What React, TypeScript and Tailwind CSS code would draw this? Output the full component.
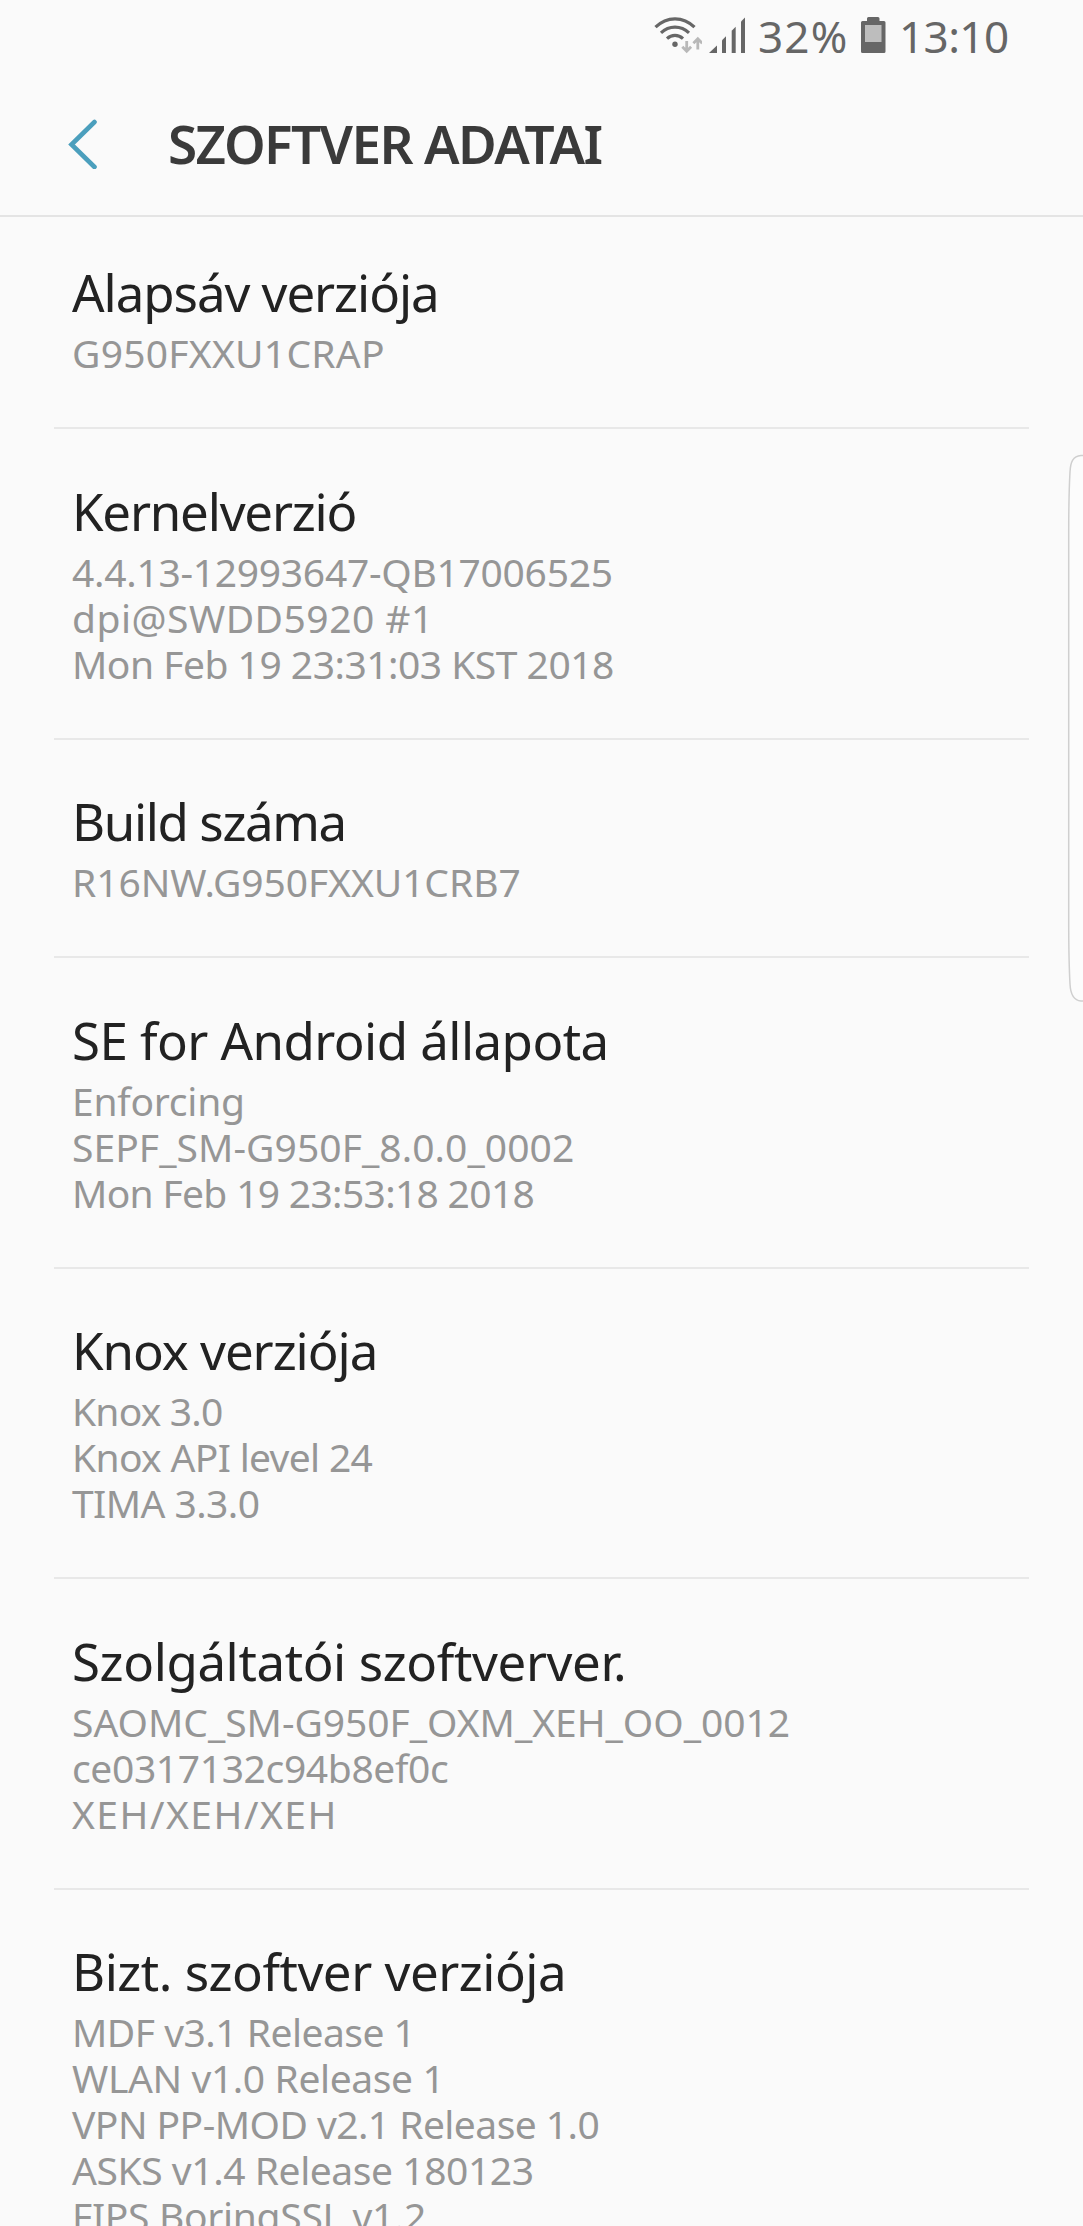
interface Line {
  text: string
  className: string
}

interface Item {
  title: Line
  lines: Line[]
}

const ITEMS: Item[] = [
  {
    title: { text: 'Alapsáv verziója', className: 'tracking-[-1.05px]' },
    lines: [{ text: 'G950FXXU1CRAP', className: 'tracking-[0.26px]' }],
  },
  {
    title: { text: 'Kernelverzió', className: 'tracking-[-1.2px]' },
    lines: [
      { text: '4.4.13-12993647-QB17006525', className: 'tracking-[-0.28px]' },
      { text: 'dpi@SWDD5920 #1', className: 'tracking-[0.48px]' },
      { text: 'Mon Feb 19 23:31:03 KST 2018', className: 'tracking-[-0.5px]' },
    ],
  },
  {
    title: { text: 'Build száma', className: 'tracking-[-1.38px]' },
    lines: [{ text: 'R16NW.G950FXXU1CRB7', className: 'tracking-[-0.07px]' }],
  },
  {
    title: { text: 'SE for Android állapota', className: 'tracking-[-0.55px]' },
    lines: [
      { text: 'Enforcing', className: 'tracking-[-0.25px]' },
      { text: 'SEPF_SM-G950F_8.0.0_0002', className: 'tracking-[0.06px]' },
      { text: 'Mon Feb 19 23:53:18 2018', className: 'tracking-[-0.68px]' },
    ],
  },
  {
    title: { text: 'Knox verziója', className: 'tracking-[-1.03px]' },
    lines: [
      { text: 'Knox 3.0', className: 'tracking-[-0.8px]' },
      { text: 'Knox API level 24', className: 'tracking-[-0.67px]' },
      { text: 'TIMA 3.3.0', className: 'tracking-[-0.57px]' },
    ],
  },
  {
    title: { text: 'Szolgáltatói szoftverver.', className: 'tracking-[-0.39px]' },
    lines: [
      { text: 'SAOMC_SM-G950F_OXM_XEH_OO_0012', className: 'tracking-[-0.03px]' },
      { text: 'ce0317132c94b8ef0c', className: 'tracking-[-0.37px]' },
      { text: 'XEH/XEH/XEH', className: 'tracking-[1.51px]' },
    ],
  },
  {
    title: { text: 'Bizt. szoftver verziója', className: 'tracking-[-0.49px]' },
    lines: [
      { text: 'MDF v3.1 Release 1', className: 'tracking-[-0.51px]' },
      { text: 'WLAN v1.0 Release 1', className: 'tracking-[-0.39px]' },
      { text: 'VPN PP-MOD v2.1 Release 1.0', className: 'tracking-[-0.55px]' },
      { text: 'ASKS v1.4 Release 180123', className: 'tracking-[-0.43px]' },
      { text: 'FIPS BoringSSL v1.2', className: 'tracking-[-0.32px]' },
    ],
  },
]

function WifiIcon() {
  return (
    <svg className="h-[72px] w-[50px]" viewBox="652 0 50 72" fill="none">
      <g stroke="#666" strokeWidth="3.2">
        <path d="M655.5 27.2Q664 18.8 675 18.8T694.5 27.2" />
        <path d="M661 32.8Q667 27.2 675 27.2T689 32.8" />
        <path d="M667 38.6Q670.5 35.4 675 35.4T683 38.6" />
      </g>
      <circle cx="675" cy="44.2" r="2.7" fill="#666" />
      <g stroke="#b8b8b8" strokeWidth="2.8">
        <path d="M686.7 41V51M682.3 46.8L686.7 51.2L691.1 46.8" />
        <path d="M697.8 49.5V39M693.4 43.2L697.8 38.8L702.2 43.2" />
      </g>
    </svg>
  )
}

function SignalIcon() {
  return (
    <svg className="h-[72px] w-[38px]" viewBox="708 0 38 72" fill="#666">
      <path d="M709 53L717 45.5V53Z" />
      <path d="M722 53V40.2L726 36.2V53Z" />
      <path d="M731.7 53V30.7L735.7 26.7V53Z" />
      <path d="M741 53V21.5L745 17.5V53Z" />
    </svg>
  )
}

function BatteryIcon() {
  return (
    <svg className="h-[72px] w-[26px]" viewBox="860 0 26 72">
      <path d="M868.5 17H878Q879.5 17 879.5 18.5V21H884Q885.5 21 885.5 22.5V51.5Q885.5 53 884 53H862.5Q861 53 861 51.5V22.5Q861 21 862.5 21H867V18.5Q867 17 868.5 17Z" fill="#666" />
      <rect x="865" y="25" width="16.5" height="17" fill="#bdbdbd" />
    </svg>
  )
}

export default function App() {
  return (
    <div className="relative h-[2226px] w-[1083px] overflow-hidden bg-[#fafafa] font-['Noto_Sans','Open_Sans',sans-serif]">
      <div className="flex h-[72px] items-start pl-[652px] text-[44px] leading-[72px] text-[#666]">
        <WifiIcon />
        <div className="ml-[6px]">
          <SignalIcon />
        </div>
        <span className="ml-[12px] w-[102px] whitespace-nowrap tracking-[1.2px]">32%</span>
        <BatteryIcon />
        <span className="ml-[13px] whitespace-nowrap tracking-[-0.6px]">13:10</span>
      </div>

      <header className="flex h-[145px] items-center border-b-2 border-[#e4e4e4] pl-[66px]">
        <svg className="h-[50px] w-[32px]" viewBox="0 0 32 50" fill="none" stroke="#4b9fbd" strokeWidth="4.6">
          <path d="M28.5 3L5.5 25.5L28.5 48" strokeLinecap="round" />
        </svg>
        <h1 className="ml-[70px] whitespace-nowrap text-[53px] leading-[72px] font-semibold tracking-[-1.59px] text-[#3a3a3a]">
          SZOFTVER ADATAI
        </h1>
      </header>

      <ul className="mr-[54px] ml-[54px]">
        {ITEMS.map((item, i) => (
          <li
            key={item.title.text}
            className={`border-b-2 border-[#e8e8e8] pb-[51px] pl-[18px] ${i === 0 ? 'pt-[38px]' : 'pt-[44.5px]'}`}
          >
            <h2 className={`whitespace-nowrap text-[51px] leading-[75px] text-[#222] ${item.title.className}`}>
              {item.title.text}
            </h2>
            {item.lines.map(line => (
              <p
                key={line.text}
                className={`whitespace-nowrap text-[39px] leading-[46px] text-[#969696] ${line.className}`}
              >
                {line.text}
              </p>
            ))}
          </li>
        ))}
      </ul>

      {/* edge panel handle */}
      <svg className="absolute top-[450px] right-0 h-[556px] w-[20px]" viewBox="0 0 20 556" fill="#fcfcfc" stroke="#cfcfcf" strokeWidth="1.5">
        <path d="M21 5.5H18C10 6 7.500 12 7 22Q5.700 45 5.700 85V470Q5.700 510 7 534C7.500 544 11 550.500 18 551H21" />
      </svg>
    </div>
  )
}
